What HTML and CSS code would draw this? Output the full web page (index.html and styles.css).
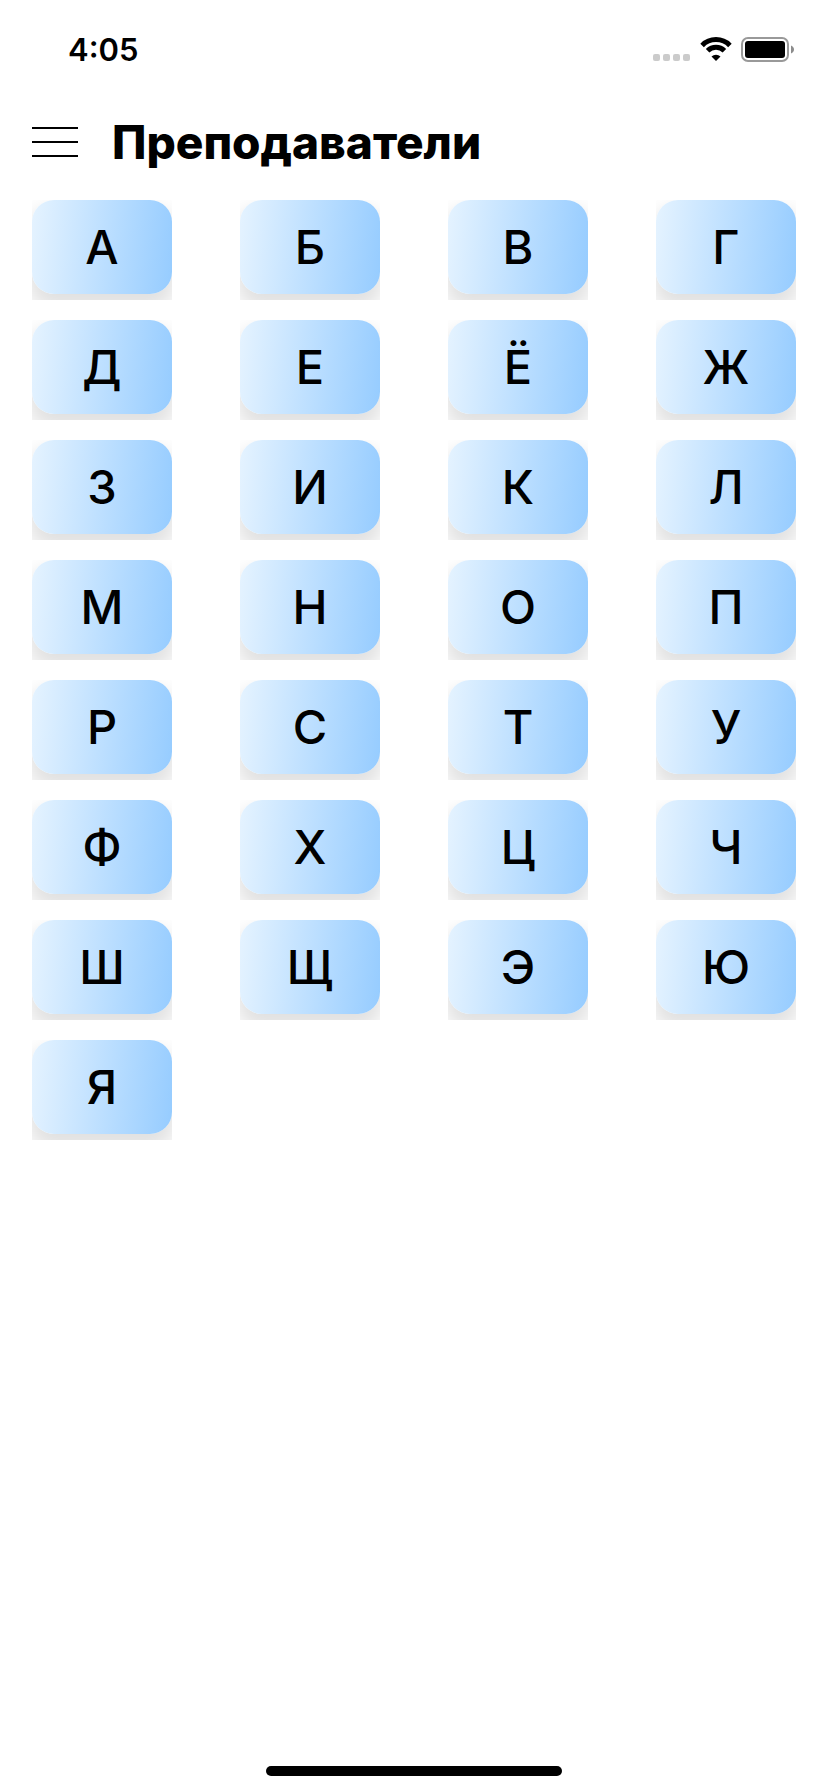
FILE: index.html
```html
<!DOCTYPE html>
<html lang="ru">
<head>
<meta charset="utf-8">
<meta name="viewport" content="width=device-width, initial-scale=1">
<title>Преподаватели</title>
<link rel="stylesheet" href="styles.css">
</head>
<body>
<div class="status">
  <time class="clock">4:05</time>
  <div class="indicators">
    <svg class="signal" width="38" height="24" viewBox="0 0 38 24" fill="#cbcbcb" aria-hidden="true">
      <rect x="0" y="17" width="7" height="7" rx="2"/><rect x="10" y="17" width="7" height="7" rx="2"/><rect x="20" y="17" width="7" height="7" rx="2"/><rect x="30" y="17" width="7" height="7" rx="2"/>
    </svg>
    <svg class="wifi" width="32" height="24" viewBox="0 0 32 24" aria-hidden="true">
      <path fill="none" stroke="#000" stroke-width="5" d="M2.1 8.4a19.6 19.6 0 0 1 27.8 0M7.6 13.8a11.9 11.9 0 0 1 16.8 0"/>
      <path d="M16 24l-4.5-4.400a6.400 6.400 0 0 1 9 0z"/>
    </svg>
    <svg class="battery" width="53" height="25" viewBox="0 0 53 25" aria-hidden="true">
      <rect x="1" y="1" width="46" height="23" rx="6" fill="none" stroke="#999" stroke-width="2"/>
      <rect x="4" y="4" width="40" height="17" rx="3"/>
      <path fill="#8c8c8c" d="M50 8.500c4 1.500 4 6.500 0 8z"/>
    </svg>
  </div>
</div>
<header class="header">
  <button class="menu" type="button" aria-label="Меню"><span class="line"></span><span class="line"></span><span class="line"></span></button>
  <h1 class="title">Преподаватели</h1>
</header>
<main class="content">
  <ul class="letters">
    <li class="cell"><button class="letter" type="button">А</button></li>
    <li class="cell"><button class="letter" type="button">Б</button></li>
    <li class="cell"><button class="letter" type="button">В</button></li>
    <li class="cell"><button class="letter" type="button">Г</button></li>
    <li class="cell"><button class="letter" type="button">Д</button></li>
    <li class="cell"><button class="letter" type="button">Е</button></li>
    <li class="cell"><button class="letter" type="button">Ё</button></li>
    <li class="cell"><button class="letter" type="button">Ж</button></li>
    <li class="cell"><button class="letter" type="button">З</button></li>
    <li class="cell"><button class="letter" type="button">И</button></li>
    <li class="cell"><button class="letter" type="button">К</button></li>
    <li class="cell"><button class="letter" type="button">Л</button></li>
    <li class="cell"><button class="letter" type="button">М</button></li>
    <li class="cell"><button class="letter" type="button">Н</button></li>
    <li class="cell"><button class="letter" type="button">О</button></li>
    <li class="cell"><button class="letter" type="button">П</button></li>
    <li class="cell"><button class="letter" type="button">Р</button></li>
    <li class="cell"><button class="letter" type="button">С</button></li>
    <li class="cell"><button class="letter" type="button">Т</button></li>
    <li class="cell"><button class="letter" type="button">У</button></li>
    <li class="cell"><button class="letter" type="button">Ф</button></li>
    <li class="cell"><button class="letter" type="button">Х</button></li>
    <li class="cell"><button class="letter" type="button">Ц</button></li>
    <li class="cell"><button class="letter" type="button">Ч</button></li>
    <li class="cell"><button class="letter" type="button">Ш</button></li>
    <li class="cell"><button class="letter" type="button">Щ</button></li>
    <li class="cell"><button class="letter" type="button">Э</button></li>
    <li class="cell"><button class="letter" type="button">Ю</button></li>
    <li class="cell"><button class="letter" type="button">Я</button></li>
  </ul>
</main>
<footer class="home"><span class="home-bar"></span></footer>
</body>
</html>
```
FILE: styles.css
```css
* { box-sizing: border-box; }

body {
  margin: 0;
  min-height: 100vh;
  display: flex;
  flex-direction: column;
  background: #fff;
  color: #000;
  font-family: Inter, "Liberation Sans", sans-serif;
}

button {
  margin: 0;
  padding: 0;
  border: 0;
  background: none;
  color: inherit;
  font: inherit;
  cursor: pointer;
}

.status {
  display: flex;
  align-items: center;
  justify-content: space-between;
  height: 98px;
  padding: 0 34px 0 68px;
}

.clock {
  padding-top: 2px;
  font-size: 31px;
  line-height: 40px;
  font-weight: 600;
}

.indicators {
  display: flex;
  align-items: center;
  gap: 9px;
}

.header {
  display: flex;
  align-items: center;
  gap: 34px;
  height: 88px;
  padding: 0 32px;
}

.menu {
  display: flex;
  flex-direction: column;
  gap: 12px;
  width: 46px;
}

.line {
  height: 2px;
  background: #000;
}

.title {
  margin: 0;
  font-size: 46px;
  line-height: 56px;
  font-weight: 800;
}

.content {
  flex: 1;
  padding: 14px 32px;
}

.letters {
  display: grid;
  grid-template-columns: repeat(4, 140px);
  justify-content: space-between;
  row-gap: 20px;
  margin: 0;
  padding: 0;
  list-style: none;
}

.cell {
  overflow: hidden;
  padding-bottom: 6px;
}

.letter {
  display: block;
  width: 100%;
  height: 94px;
  border-radius: 22px;
  background: linear-gradient(95deg, #e5f3ff, #96ccff);
  box-shadow: 0 12px 20px 4px rgba(0, 0, 0, 0.12);
  font-size: 47px;
  line-height: 56px;
  font-weight: 500;
}

.home {
  display: flex;
  justify-content: center;
  padding-bottom: 16px;
}

.home-bar {
  width: 296px;
  height: 10px;
  border-radius: 5px;
  background: #000;
}
```
